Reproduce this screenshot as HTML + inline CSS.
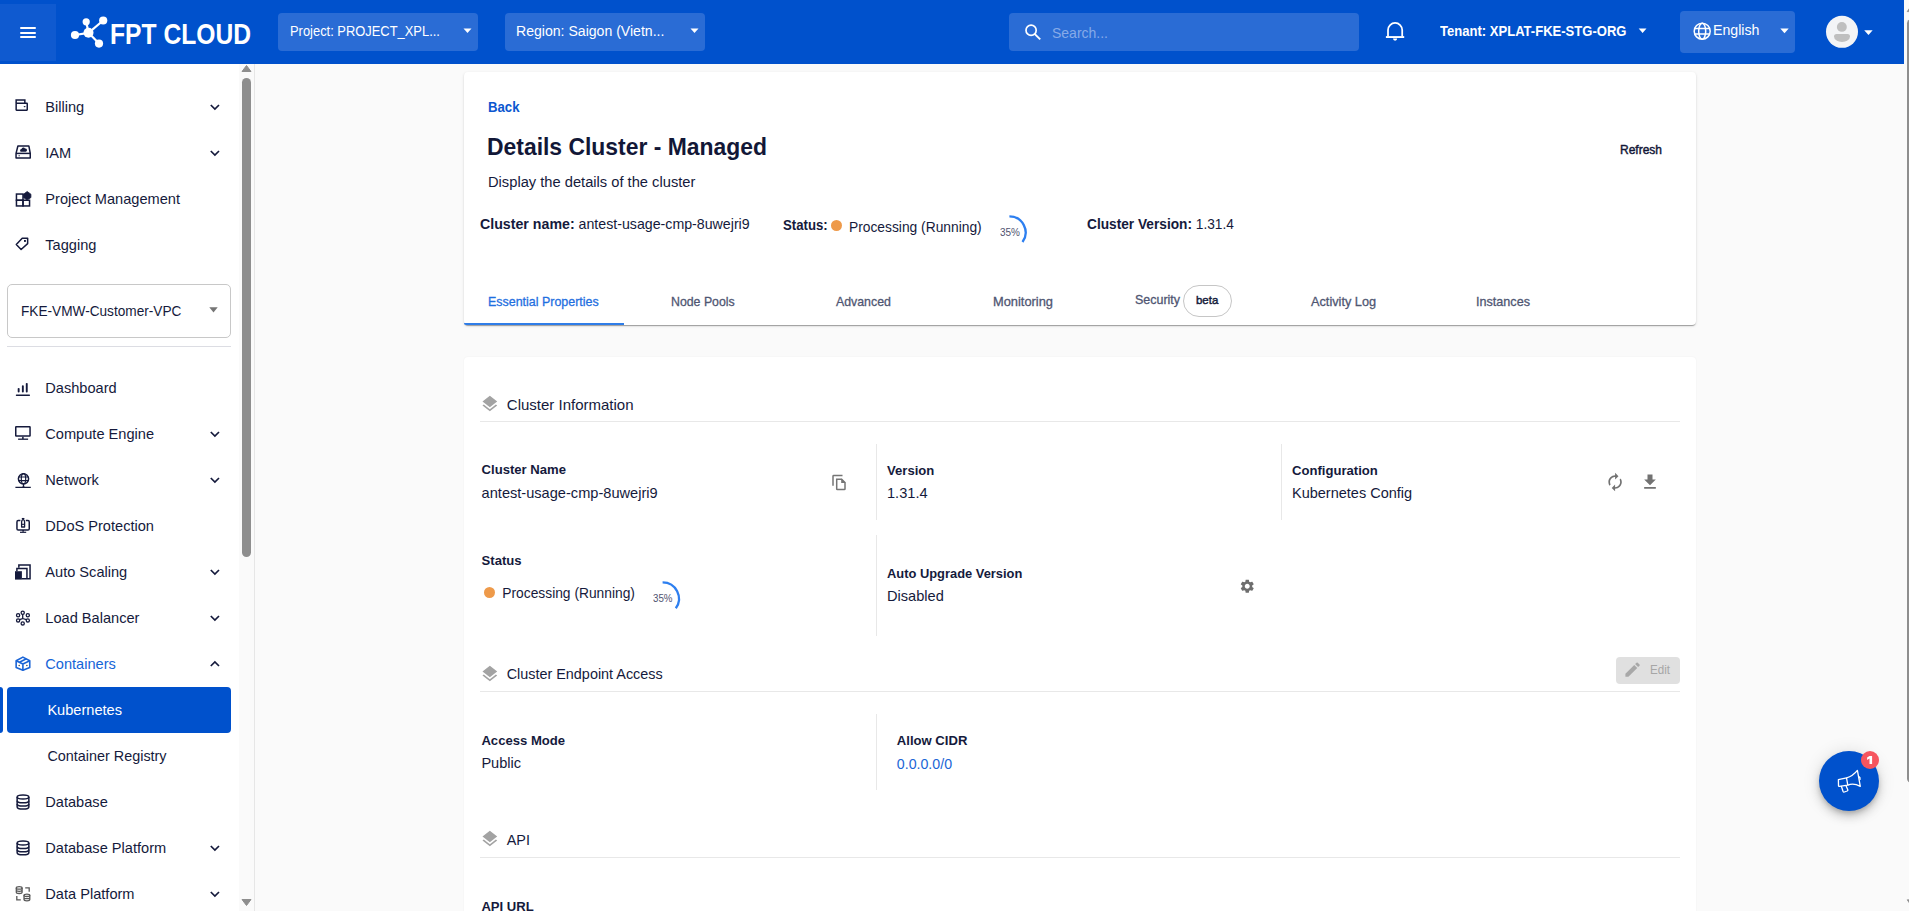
<!DOCTYPE html>
<html><head><meta charset="utf-8"><title>FPT Cloud - Details Cluster</title>
<style>
html,body{margin:0;padding:0;}
body{width:1909px;height:911px;overflow:hidden;position:relative;background:#fafafa;font-family:"Liberation Sans",sans-serif;}
.t{position:absolute;white-space:nowrap;line-height:20px;}
b{font-weight:700}
</style></head><body>
<div style="position:absolute;left:0px;top:0px;width:1904px;height:64px;background:#0051cc"></div>
<div style="position:absolute;left:0px;top:4px;width:56px;height:57px;background:#0f5ad0"></div>
<div style="position:absolute;left:19.5px;top:27px;width:16px;height:2px;background:#fff;border-radius:1px"></div>
<div style="position:absolute;left:19.5px;top:32px;width:16px;height:2px;background:#fff;border-radius:1px"></div>
<div style="position:absolute;left:19.5px;top:36px;width:16px;height:2px;background:#fff;border-radius:1px"></div>
<svg style="position:absolute;left:60px;top:5px;" width="60" height="50" viewBox="0 0 60 50"><g fill="#fff" stroke="#fff"><line x1="28.5" y1="27.8" x2="26.2" y2="16.8" stroke-width="2.2"/><line x1="28.5" y1="27.8" x2="43.2" y2="15.5" stroke-width="2.2"/><line x1="28.5" y1="27.8" x2="15" y2="30" stroke-width="2.2"/><line x1="28.5" y1="27.8" x2="39" y2="38.6" stroke-width="2.2"/><circle cx="26.2" cy="16.8" r="3.6" stroke="none"/><circle cx="43.2" cy="15.5" r="4.1" stroke="none"/><circle cx="28.5" cy="27.8" r="5" stroke="none"/><circle cx="15" cy="30" r="4.1" stroke="none"/><circle cx="39" cy="38.6" r="4.1" stroke="none"/></g></svg>
<div class="t" style="left:110.3px;top:23.80px;font-size:30px;font-weight:700;color:#fff;transform:scaleX(0.8214);transform-origin:0 0;">FPT CLOUD</div>
<div style="position:absolute;left:278px;top:13px;width:200px;height:38px;background:#2a6cd5;border-radius:4px"></div>
<div class="t" style="left:289.8px;top:20.79px;font-size:14.9px;font-weight:400;color:#fff;transform:scaleX(0.8667);transform-origin:0 0;">Project: PROJECT_XPL...</div>
<svg style="position:absolute;left:463px;top:28px;" width="10" height="6" viewBox="0 0 10 6"><path d="M0.5 0.5 L8.5 0.5 L4.5 5 Z" fill="#fff"/></svg>
<div style="position:absolute;left:505px;top:13px;width:200px;height:38px;background:#2a6cd5;border-radius:4px"></div>
<div class="t" style="left:516.3px;top:20.79px;font-size:14.9px;font-weight:400;color:#fff;transform:scaleX(0.9452);transform-origin:0 0;">Region: Saigon (Vietn...</div>
<svg style="position:absolute;left:690px;top:28px;" width="10" height="6" viewBox="0 0 10 6"><path d="M0.5 0.5 L8.5 0.5 L4.5 5 Z" fill="#fff"/></svg>
<div style="position:absolute;left:1009px;top:13px;width:350px;height:38px;background:#2a6cd5;border-radius:4px"></div>
<svg style="position:absolute;left:1022px;top:21px;" width="22" height="22" viewBox="0 0 22 22"><circle cx="9.1" cy="9.3" r="5.1" fill="none" stroke="#fff" stroke-width="1.7"/><path d="M12.6 12.8 L18.2 18.4" stroke="#fff" stroke-width="1.9"/></svg>
<div class="t" style="left:1051.6px;top:22.82px;font-size:14.5px;font-weight:400;color:#86aae8;transform:scaleX(0.9650);transform-origin:0 0;">Search...</div>
<svg style="position:absolute;left:1380px;top:15px" width="30" height="30" viewBox="1380 15 30 30"><path d="M1388 36.6 V30.05 A7.1 7.1 0 0 1 1402.2 30.05 V36.6" fill="none" stroke="#fff" stroke-width="1.75"/><rect x="1385.9" y="36.1" width="18.3" height="1.9" fill="#fff"/><path d="M1393 38.6 H1397.2 A2.1 2.1 0 0 1 1393 38.6 Z" fill="#fff"/></svg>
<div class="t" style="left:1440.2px;top:20.87px;font-size:15.5px;font-weight:700;color:#fff;transform:scaleX(0.8417);transform-origin:0 0;">Tenant: XPLAT-FKE-STG-ORG</div>
<svg style="position:absolute;left:1634px;top:24px" width="16" height="12" viewBox="1634 24 16 12"><path d="M1638.7 28.6 L1646.5 28.6 L1642.6 33.1 Z" fill="#fff"/></svg>
<div style="position:absolute;left:1680px;top:11px;width:115px;height:42px;background:#2a6cd5;border-radius:4px"></div>
<svg style="position:absolute;left:1693px;top:22px;" width="19" height="19" viewBox="0 0 19 19"><g fill="none" stroke="#fff" stroke-width="1.5"><circle cx="9.2" cy="9.2" r="8"/><ellipse cx="9.2" cy="9.2" rx="3.5" ry="8"/><path d="M1.5 6.5h15.4M1.5 12h15.4"/></g></svg>
<div class="t" style="left:1713px;top:19.79px;font-size:14.3px;font-weight:400;color:#fff;transform:scaleX(0.9914);transform-origin:0 0;">English</div>
<svg style="position:absolute;left:1776px;top:24px" width="16" height="12" viewBox="1776 24 16 12"><path d="M1780.3 28.5 L1788.7 28.5 L1784.5 33.3 Z" fill="#fff"/></svg>
<svg style="position:absolute;left:1824px;top:14px" width="36" height="36" viewBox="1824 14 36 36"><circle cx="1842" cy="31.85" r="16" fill="#f3f4f6"/><circle cx="1841.85" cy="26.9" r="4.95" fill="#bfbfbf"/><path d="M1836.5 33.9 H1847.5 Q1850 33.9 1850 36.6 A8 5.3 0 0 1 1834 36.6 Q1834 33.9 1836.5 33.9 Z" fill="#bfbfbf"/></svg>
<svg style="position:absolute;left:1860px;top:26px" width="16" height="12" viewBox="1860 26 16 12"><path d="M1864.2 30.3 L1872.7 30.3 L1868.45 35.1 Z" fill="#fff"/></svg>
<div style="position:absolute;left:1904px;top:0px;width:15px;height:911px;background:#fafafa"></div>
<div style="position:absolute;left:1907px;top:19px;width:9px;height:764px;background:#8e8e8e;border-radius:5px"></div>
<svg style="position:absolute;left:1904px;top:0px" width="15" height="16" viewBox="1904 0 15 16"><path d="M1911.5 5.4 L1915.8 11.6 L1907.2 11.6Z" fill="#8e8e8e" stroke="#8e8e8e" stroke-width="0.8" stroke-linejoin="round"/></svg>
<svg style="position:absolute;left:1904px;top:895px" width="15" height="16" viewBox="1904 895 15 16"><path d="M1907.2 899.8 L1915.8 899.8 L1911.5 906Z" fill="#8e8e8e" stroke="#8e8e8e" stroke-width="0.8" stroke-linejoin="round"/></svg>
<div style="position:absolute;left:0px;top:64px;width:254px;height:847px;background:#fff"></div>
<div style="position:absolute;left:254px;top:64px;width:1px;height:847px;background:#e6e6e6"></div>
<div style="position:absolute;left:239px;top:64px;width:15px;height:847px;background:#fafafa"></div>
<div style="position:absolute;left:242px;top:78px;width:9px;height:479px;background:#8e8e8e;border-radius:5px"></div>
<svg style="position:absolute;left:241px;top:64px;" width="11" height="9" viewBox="0 0 11 9"><path d="M5.5 1.5 L10 7.5 L1 7.5Z" fill="#8e8e8e" stroke="#8e8e8e" stroke-linejoin="round"/></svg>
<svg style="position:absolute;left:241px;top:898px;" width="11" height="9" viewBox="0 0 11 9"><path d="M1 1.5 L10 1.5 L5.5 7.5Z" fill="#8e8e8e" stroke="#8e8e8e" stroke-linejoin="round"/></svg>
<div class="t" style="left:45.3px;top:96.89px;font-size:14.6px;font-weight:400;color:#151a3c;">Billing</div>
<svg style="position:absolute;left:209px;top:102.5px;" width="12" height="8" viewBox="0 0 12 8"><path d="M1.8 2 L5.9 6 L10 2" fill="none" stroke="#151a3c" stroke-width="1.7"/></svg>
<div class="t" style="left:45.3px;top:142.89px;font-size:14.6px;font-weight:400;color:#151a3c;">IAM</div>
<svg style="position:absolute;left:209px;top:148.5px;" width="12" height="8" viewBox="0 0 12 8"><path d="M1.8 2 L5.9 6 L10 2" fill="none" stroke="#151a3c" stroke-width="1.7"/></svg>
<div class="t" style="left:45.3px;top:188.89px;font-size:14.6px;font-weight:400;color:#151a3c;">Project Management</div>
<div class="t" style="left:45.3px;top:235.39px;font-size:14.6px;font-weight:400;color:#151a3c;">Tagging</div>
<div style="position:absolute;left:7px;top:284px;width:224px;height:54px;box-sizing:border-box;border:1px solid #c8c8c8;border-radius:5px;background:#fff"></div>
<div class="t" style="left:21.2px;top:300.83px;font-size:14.2px;font-weight:400;color:#151a3c;transform:scaleX(0.9611);transform-origin:0 0;">FKE-VMW-Customer-VPC</div>
<svg style="position:absolute;left:205px;top:302px" width="16" height="14" viewBox="205 302 16 14"><path d="M209.3 307.3 L217.7 307.3 L213.5 312.4 Z" fill="#757575"/></svg>
<div style="position:absolute;left:7px;top:346px;width:224px;height:1px;background:#dcdde3"></div>
<div class="t" style="left:45.3px;top:378.19px;font-size:14.6px;font-weight:400;color:#151a3c;">Dashboard</div>
<div class="t" style="left:45.3px;top:424.29px;font-size:14.6px;font-weight:400;color:#151a3c;">Compute Engine</div>
<svg style="position:absolute;left:209px;top:429.9px;" width="12" height="8" viewBox="0 0 12 8"><path d="M1.8 2 L5.9 6 L10 2" fill="none" stroke="#151a3c" stroke-width="1.7"/></svg>
<div class="t" style="left:45.3px;top:470.09px;font-size:14.6px;font-weight:400;color:#151a3c;">Network</div>
<svg style="position:absolute;left:209px;top:475.7px;" width="12" height="8" viewBox="0 0 12 8"><path d="M1.8 2 L5.9 6 L10 2" fill="none" stroke="#151a3c" stroke-width="1.7"/></svg>
<div class="t" style="left:45.3px;top:515.99px;font-size:14.6px;font-weight:400;color:#151a3c;">DDoS Protection</div>
<div class="t" style="left:45.3px;top:562.09px;font-size:14.6px;font-weight:400;color:#151a3c;">Auto Scaling</div>
<svg style="position:absolute;left:209px;top:567.7px;" width="12" height="8" viewBox="0 0 12 8"><path d="M1.8 2 L5.9 6 L10 2" fill="none" stroke="#151a3c" stroke-width="1.7"/></svg>
<div class="t" style="left:45.3px;top:608.19px;font-size:14.6px;font-weight:400;color:#151a3c;">Load Balancer</div>
<svg style="position:absolute;left:209px;top:613.8px;" width="12" height="8" viewBox="0 0 12 8"><path d="M1.8 2 L5.9 6 L10 2" fill="none" stroke="#151a3c" stroke-width="1.7"/></svg>
<div class="t" style="left:45.3px;top:654.29px;font-size:14.6px;font-weight:400;color:#1565d8;">Containers</div>
<svg style="position:absolute;left:209px;top:659.9px;" width="12" height="8" viewBox="0 0 12 8"><path d="M1.8 6 L5.9 2 L10 6" fill="none" stroke="#151a3c" stroke-width="1.7"/></svg>
<svg style="position:absolute;left:10px;top:94px" width="24" height="20" viewBox="10 94 24 20"><g fill="none" stroke="#151a3c" stroke-width="1.5"><rect x="16.15" y="103.35" width="11.1" height="6.8" rx="0.4"/><path d="M16.15 103.35 V100.05 H24.85 V103.35"/></g><ellipse cx="24.6" cy="106.6" rx="1" ry="0.65" fill="#151a3c"/></svg>
<svg style="position:absolute;left:10px;top:140px" width="24" height="22" viewBox="10 140 24 22"><g fill="none" stroke="#151a3c" stroke-width="1.5" stroke-linejoin="round"><path d="M17.9 146.05 H28.9 L30.25 153.4 V157.95 H16.05 V153.4 Z"/><path d="M16.05 153.4 H30.25"/></g><path d="M20.7 151.7 a1.5 1.5 0 0 1 0.8-2.7 a1.9 1.9 0 0 1 3.5-0.4 a1.5 1.5 0 0 1 0.8 3.1 Z" fill="#151a3c"/><rect x="18.6" y="155.2" width="1.1" height="1.1" fill="#151a3c"/></svg>
<svg style="position:absolute;left:10px;top:188px" width="24" height="22" viewBox="10 188 24 22"><g fill="none" stroke="#151a3c" stroke-width="1.5"><rect x="16.45" y="194.05" width="6.55" height="6.2"/><rect x="16.45" y="200.25" width="6.55" height="5.7"/><rect x="23" y="200.25" width="6.55" height="5.7"/></g><path d="M27.2 191.5 L30.9 194.2 V197.6 L27.2 200 L23.5 197.6 V194.2 Z" fill="#151a3c" stroke="#151a3c" stroke-width="0.8" stroke-linejoin="round"/></svg>
<svg style="position:absolute;left:10px;top:233px" width="24" height="22" viewBox="10 233 24 22"><path d="M16.3 244.6 L22.2 238.15 H27.65 V243.6 L21.1 249.5 Z" fill="none" stroke="#151a3c" stroke-width="1.5" stroke-linejoin="round"/><rect x="24" y="240" width="1.9" height="1.9" fill="#151a3c"/></svg>
<svg style="position:absolute;left:10px;top:378px" width="24" height="22" viewBox="10 378 24 22"><g fill="#151a3c"><rect x="17.7" y="387.9" width="1.9" height="4.6" rx="0.9"/><rect x="21.9" y="385.2" width="1.9" height="7.3" rx="0.9"/><rect x="25.8" y="382.9" width="1.9" height="9.6" rx="0.9"/><rect x="15.8" y="394.6" width="14.2" height="1.3" rx="0.6"/></g></svg>
<svg style="position:absolute;left:10px;top:422px" width="24" height="22" viewBox="10 422 24 22"><g fill="none" stroke="#151a3c" stroke-width="1.5"><rect x="15.75" y="426.75" width="14.3" height="9.3" rx="0.4"/><path d="M22.9 436.8 V439"/><path d="M18.1 439.2 H28.1" stroke-width="1.3"/></g></svg>
<svg style="position:absolute;left:10px;top:470px" width="24" height="22" viewBox="10 470 24 22"><g fill="none" stroke="#151a3c" stroke-width="1.5"><circle cx="23.5" cy="478.8" r="5.1"/><ellipse cx="23.5" cy="478.8" rx="2.2" ry="5.1" stroke-width="1.2"/><path d="M18.6 477 H28.4 M18.6 480.6 H28.4" stroke-width="1.1"/><path d="M23.5 484 V486 Q23.5 487.4 22 487.4 H15.4 M23.5 486 Q23.5 487.4 25 487.4 H30.8" stroke-width="1.3"/></g></svg>
<svg style="position:absolute;left:10px;top:515px" width="24" height="22" viewBox="10 515 24 22"><g fill="none" stroke="#151a3c" stroke-width="1.5" stroke-linejoin="round"><path d="M20.4 520.6 H18.2 Q16.95 520.6 16.95 521.9 V528.7 Q16.95 530 18.2 530 H28 Q29.25 530 29.25 528.7 V521.9 Q29.25 520.6 28 520.6 H25.8"/><path d="M23.1 530 V531.8"/><path d="M20 532.3 H26.2" stroke-width="1.2"/><path d="M23.1 519.3 Q24.6 519.9 24.6 522 V527 H21.6 V522 Q21.6 519.9 23.1 519.3 Z" stroke-width="1.3"/><path d="M21.6 524.3 H24.6" stroke-width="1.1"/></g><path d="M21.8 518.5 H24.4" stroke="#151a3c" stroke-width="1.1"/></svg>
<svg style="position:absolute;left:10px;top:560px" width="24" height="22" viewBox="10 560 24 22"><g fill="none" stroke="#151a3c" stroke-width="1.5"><path d="M18.85 567.7 V564.95 H30.05 V578.85 H21.9"/><path d="M16.9 571.2 V568.45 H26.95 V578.85"/></g><rect x="15" y="571.2" width="6.9" height="8.4" fill="#151a3c"/></svg>
<svg style="position:absolute;left:10px;top:608px" width="24" height="20" viewBox="10 608 24 20"><g fill="none" stroke="#151a3c" stroke-width="1.3"><circle cx="22.7" cy="612.7" r="1.6"/><circle cx="18.1" cy="615.2" r="1.6"/><circle cx="27.8" cy="615.2" r="1.6"/><circle cx="18.1" cy="620.4" r="1.6"/><circle cx="27.8" cy="620.4" r="1.6"/><circle cx="22.7" cy="623.4" r="1.6"/><path d="M22.7 614.3 V618.5 L19.6 619.7 M22.7 618.5 L26.3 619.7"/></g></svg>
<svg style="position:absolute;left:10px;top:652px" width="24" height="22" viewBox="10 652 24 22"><g fill="none" stroke="#1a64d6" stroke-width="1.6" stroke-linejoin="round"><path d="M22.9 657.1 L29.75 660.8 V667.4 L22.9 670.3 L16.15 667.4 V660.8 Z"/><path d="M16.15 660.8 L22.9 664 L29.75 660.8 M22.9 664 V670.3"/><path d="M19.4 662.3 L26.4 658.7"/></g><circle cx="19.2" cy="665.6" r="0.75" fill="#444"/><circle cx="26.9" cy="665.6" r="0.75" fill="#444"/></svg>
<svg style="position:absolute;left:10px;top:790px" width="24" height="22" viewBox="10 790 24 22"><g fill="none" stroke="#151a3c" stroke-width="1.5"><ellipse cx="23" cy="797.1" rx="5.85" ry="2.0"/><path d="M17.15 797.1 V806.9 C17.15 808.4 19.8 809.0 23 809.0 S28.85 808.4 28.85 806.9 V797.1"/><path d="M17.15 800.7 C17.15 802.2 19.8 802.8 23 802.8 S28.85 802.2 28.85 800.7 M17.15 803.9 C17.15 805.4 19.8 806.0 23 806.0 S28.85 805.4 28.85 803.9"/></g></svg>
<svg style="position:absolute;left:10px;top:836px" width="24" height="22" viewBox="10 836 24 22"><g fill="none" stroke="#151a3c" stroke-width="1.5"><ellipse cx="23" cy="842.9" rx="5.85" ry="2.0"/><path d="M17.15 842.9 V852.6999999999999 C17.15 854.1999999999999 19.8 854.8 23 854.8 S28.85 854.1999999999999 28.85 852.6999999999999 V842.9"/><path d="M17.15 846.5 C17.15 848.0 19.8 848.5999999999999 23 848.5999999999999 S28.85 848.0 28.85 846.5 M17.15 849.6999999999999 C17.15 851.1999999999999 19.8 851.8 23 851.8 S28.85 851.1999999999999 28.85 849.6999999999999"/></g></svg>
<svg style="position:absolute;left:10px;top:882px" width="24" height="22" viewBox="10 882 24 22"><g fill="none" stroke="#5a5a5a" stroke-width="1.3"><ellipse cx="19.2" cy="887.9" rx="2.9" ry="1.2"/><path d="M16.3 887.9 V892.3 C16.3 893.1 17.6 893.5 19.2 893.5 S22.1 893.1 22.1 892.3 V887.9 M16.3 890.1 C16.3 890.9 17.6 891.3 19.2 891.3 S22.1 890.9 22.1 890.1"/><ellipse cx="26.9" cy="895.3" rx="2.9" ry="1.2"/><path d="M24 895.3 V899.6 C24 900.4 25.3 900.8 26.9 900.8 S29.8 900.4 29.8 899.6 V895.3 M24 897.5 C24 898.3 25.3 898.7 26.9 898.7 S29.8 898.3 29.8 897.5"/><path d="M25.2 887.9 H29.2 V891.8 M16.8 895.9 V899.9 H20.8"/></g></svg>
<div style="position:absolute;left:0px;top:687px;width:3px;height:46px;background:#0051cc;border-radius:0 3px 3px 0"></div>
<div style="position:absolute;left:7px;top:687px;width:224px;height:46px;background:#0051cc;border-radius:4px"></div>
<div class="t" style="left:47.4px;top:699.89px;font-size:14.6px;font-weight:400;color:#fff;">Kubernetes</div>
<div class="t" style="left:47.4px;top:746.06px;font-size:14.4px;font-weight:400;color:#151a3c;">Container Registry</div>
<div class="t" style="left:45.3px;top:791.69px;font-size:14.6px;font-weight:400;color:#151a3c;">Database</div>
<div class="t" style="left:45.3px;top:838.09px;font-size:14.6px;font-weight:400;color:#151a3c;">Database Platform</div>
<svg style="position:absolute;left:209px;top:843.7px;" width="12" height="8" viewBox="0 0 12 8"><path d="M1.8 2 L5.9 6 L10 2" fill="none" stroke="#151a3c" stroke-width="1.7"/></svg>
<div class="t" style="left:45.3px;top:884.19px;font-size:14.6px;font-weight:400;color:#151a3c;">Data Platform</div>
<svg style="position:absolute;left:209px;top:889.8px;" width="12" height="8" viewBox="0 0 12 8"><path d="M1.8 2 L5.9 6 L10 2" fill="none" stroke="#151a3c" stroke-width="1.7"/></svg>
<div style="position:absolute;left:464px;top:72px;width:1232px;height:253px;background:#fff;border-radius:4px;box-shadow:0 2px 1px -1px rgba(0,0,0,.2),0 1px 1px 0 rgba(0,0,0,.14),0 1px 3px 0 rgba(0,0,0,.12)"></div>
<div class="t" style="left:487.5px;top:97.00px;font-size:14.3px;font-weight:700;color:#0b57d0;transform:scaleX(0.9214);transform-origin:0 0;">Back</div>
<div class="t" style="left:487.2px;top:137.43px;font-size:24.5px;font-weight:700;color:#121737;transform:scaleX(0.9348);transform-origin:0 0;">Details Cluster - Managed</div>
<div class="t" style="left:488px;top:171.85px;font-size:14.7px;font-weight:400;color:#151a3c;">Display the details of the cluster</div>
<div class="t" style="left:1620px;top:140.39px;font-size:12.9px;font-weight:400;color:#121737;-webkit-text-stroke:0.45px #121737;transform:scaleX(0.9298);transform-origin:0 0;">Refresh</div>
<div class="t" style="left:480px;top:213.63px;font-size:14.2px;font-weight:400;color:#151a3c;"><b>Cluster name:</b> antest-usage-cmp-8uwejri9</div>
<div class="t" style="left:783.2px;top:214.63px;font-size:14.2px;font-weight:400;color:#151a3c;transform:scaleX(0.9309);transform-origin:0 0;"><b>Status:</b></div>
<div style="position:absolute;left:831.3px;top:220px;width:11px;height:11px;background:#ee9a4a;border-radius:50%"></div>
<div class="t" style="left:849px;top:218.17px;font-size:13.8px;font-weight:400;color:#151a3c;">Processing (Running)</div>
<div class="t" style="left:999.6px;top:221.92px;font-size:10.8px;font-weight:400;color:#4f5370;transform:scaleX(0.9252);transform-origin:0 0;">35%</div>
<svg style="position:absolute;left:990px;top:210px" width="40" height="40" viewBox="990 210 40 40"><path d="M1009.4 216.3 A16.2 16.2 0 0 1 1022.5 242.0" fill="none" stroke="#2d7ff0" stroke-width="2.3"/></svg>
<div class="t" style="left:1086.8px;top:214.13px;font-size:14.2px;font-weight:400;color:#151a3c;transform:scaleX(0.9650);transform-origin:0 0;"><b>Cluster Version:</b> 1.31.4</div>
<div class="t" style="left:488.0px;top:292.38px;font-size:13.2px;font-weight:400;color:#1f6fdf;-webkit-text-stroke:0.3px #1f6fdf;transform:scaleX(0.9439);transform-origin:0 0;">Essential Properties</div>
<div class="t" style="left:671.2px;top:292.38px;font-size:13.2px;font-weight:400;color:#4f5672;-webkit-text-stroke:0.3px #4f5672;transform:scaleX(0.9349);transform-origin:0 0;">Node Pools</div>
<div class="t" style="left:835.7px;top:292.38px;font-size:13.2px;font-weight:400;color:#4f5672;-webkit-text-stroke:0.3px #4f5672;transform:scaleX(0.9351);transform-origin:0 0;">Advanced</div>
<div class="t" style="left:993.3000000000001px;top:292.38px;font-size:13.2px;font-weight:400;color:#4f5672;-webkit-text-stroke:0.3px #4f5672;transform:scaleX(0.9735);transform-origin:0 0;">Monitoring</div>
<div class="t" style="left:1310.5px;top:292.38px;font-size:13.2px;font-weight:400;color:#4f5672;-webkit-text-stroke:0.3px #4f5672;transform:scaleX(0.9645);transform-origin:0 0;">Activity Log</div>
<div class="t" style="left:1476.2px;top:292.38px;font-size:13.2px;font-weight:400;color:#4f5672;-webkit-text-stroke:0.3px #4f5672;transform:scaleX(0.9558);transform-origin:0 0;">Instances</div>
<div class="t" style="left:1135px;top:290.02px;font-size:12.8px;font-weight:400;color:#4f5672;-webkit-text-stroke:0.3px #4f5672;transform:scaleX(0.9732);transform-origin:0 0;">Security</div>
<div style="position:absolute;left:1183px;top:285px;width:49px;height:32px;box-sizing:border-box;border:1px solid #c6c6c6;border-radius:16px;background:#fff"></div>
<div class="t" style="left:1196.3px;top:289.57px;font-size:11.8px;font-weight:400;color:#141a3b;-webkit-text-stroke:0.45px #141a3b;transform:scaleX(0.9710);transform-origin:0 0;">beta</div>
<div style="position:absolute;left:464px;top:323px;width:160px;height:2px;background:#2f7de8;border-radius:0 0 0 3px"></div>
<div style="position:absolute;left:464px;top:357px;width:1232px;height:600px;background:#fff;border-radius:4px;box-shadow:0 0 2px rgba(0,0,0,.06)"></div>
<div class="t" style="left:506.8px;top:394.55px;font-size:15.0px;font-weight:400;color:#151a3c;">Cluster Information</div>
<svg style="position:absolute;left:480.4px;top:394.4px" width="19.7" height="19.7" viewBox="0 0 24 24"><path fill="#a3a3a3" d="M11.99 18.54l-7.37-5.73L3 14.07l9 7 9-7-1.63-1.27-7.38 5.74zM12 16l7.36-5.73L21 9l-9-7-9 7 1.63 1.27L12 16z"/></svg>
<div style="position:absolute;left:480px;top:421px;width:1200px;height:1px;background:#e8e8e8"></div>
<div class="t" style="left:481.6px;top:460.22px;font-size:13.1px;font-weight:700;color:#151a3c;">Cluster Name</div>
<div class="t" style="left:481.6px;top:482.99px;font-size:14.6px;font-weight:400;color:#151a3c;">antest-usage-cmp-8uwejri9</div>
<svg style="position:absolute;left:828px;top:470px" width="22" height="24" viewBox="828 470 22 24"><g fill="none" stroke="#757575" stroke-width="1.5"><path d="M833 485.8 V476.3 Q833 475.6 833.7 475.6 H842.5"/><path d="M836.7 479.2 H841.6 L845 482.6 V488.9 Q845 489.6 844.3 489.6 H837.4 Q836.7 489.6 836.7 488.9 Z"/></g><path d="M841.2 478.6 L845.6 483 H841.2 Z" fill="#757575"/></svg>
<div style="position:absolute;left:876px;top:444px;width:1px;height:76px;background:#e8e8e8"></div>
<div class="t" style="left:887px;top:460.72px;font-size:13.1px;font-weight:700;color:#151a3c;">Version</div>
<div class="t" style="left:887px;top:482.89px;font-size:14.6px;font-weight:400;color:#151a3c;">1.31.4</div>
<div style="position:absolute;left:1281px;top:444px;width:1px;height:76px;background:#e8e8e8"></div>
<div class="t" style="left:1292px;top:460.72px;font-size:13.1px;font-weight:700;color:#151a3c;">Configuration</div>
<div class="t" style="left:1292px;top:482.93px;font-size:14.5px;font-weight:400;color:#151a3c;">Kubernetes Config</div>
<svg style="position:absolute;left:1605.2px;top:472.4px" width="20.2" height="20.2" viewBox="0 0 24 24"><path fill="#727272" d="M12 6v3l4-4-4-4v3c-4.42 0-8 3.58-8 8 0 1.57.46 3.03 1.24 4.26L6.7 14.8c-.45-.83-.7-1.79-.7-2.8 0-3.31 2.69-6 6-6zm6.76 1.74L17.3 9.2c.44.84.7 1.79.7 2.8 0 3.31-2.69 6-6 6v-3l-4 4 4 4v-3c4.42 0 8-3.58 8-8 0-1.57-.46-3.03-1.24-4.26z"/></svg>
<svg style="position:absolute;left:1639.5px;top:472.3px" width="20" height="20" viewBox="0 0 24 24"><path fill="#727272" d="M19 9h-4V3H9v6H5l7 7 7-7zM5 18v2h14v-2H5z"/></svg>
<div class="t" style="left:481.6px;top:551.01px;font-size:13.1px;font-weight:700;color:#151a3c;">Status</div>
<div style="position:absolute;left:484px;top:587px;width:11px;height:11px;background:#ee9a4a;border-radius:50%"></div>
<div class="t" style="left:502.3px;top:584.37px;font-size:13.8px;font-weight:400;color:#151a3c;">Processing (Running)</div>
<div class="t" style="left:653.4px;top:587.92px;font-size:10.8px;font-weight:400;color:#4f5370;transform:scaleX(0.9021);transform-origin:0 0;">35%</div>
<svg style="position:absolute;left:640px;top:575px" width="45" height="45" viewBox="640 575 45 45"><path d="M662.6 582.4 A16.3 16.3 0 0 1 675.8 608.3" fill="none" stroke="#2d7ff0" stroke-width="2.3"/></svg>
<div style="position:absolute;left:876px;top:535px;width:1px;height:101px;background:#e8e8e8"></div>
<div class="t" style="left:887px;top:563.78px;font-size:12.9px;font-weight:700;color:#151a3c;">Auto Upgrade Version</div>
<div class="t" style="left:887px;top:585.79px;font-size:14.6px;font-weight:400;color:#151a3c;">Disabled</div>
<svg style="position:absolute;left:1238.5px;top:577.5px" width="16.5" height="16.5" viewBox="0 0 24 24"><path fill="#6e6e6e" d="M19.14 12.94c.04-.3.06-.61.06-.94 0-.32-.02-.64-.07-.94l2.03-1.58c.18-.14.23-.41.12-.61l-1.92-3.32c-.12-.22-.37-.29-.59-.22l-2.39.96c-.5-.38-1.03-.7-1.62-.94l-.36-2.54c-.04-.24-.24-.41-.48-.41h-3.84c-.24 0-.43.17-.47.41l-.36 2.54c-.59.24-1.13.57-1.62.94l-2.39-.96c-.22-.08-.47 0-.59.22L2.74 8.87c-.12.21-.08.47.12.61l2.03 1.58c-.05.3-.09.63-.09.94s.02.64.07.94l-2.03 1.58c-.18.14-.23.41-.12.61l1.92 3.32c.12.22.37.29.59.22l2.39-.96c.5.38 1.03.7 1.62.94l.36 2.54c.05.24.24.41.48.41h3.84c.24 0 .44-.17.47-.41l.36-2.54c.59-.24 1.13-.56 1.62-.94l2.39.96c.22.08.47 0 .59-.22l1.92-3.32c.12-.22.07-.47-.12-.61l-2.01-1.58zM12 15.6c-1.98 0-3.6-1.62-3.6-3.6s1.62-3.6 3.6-3.6 3.6 1.62 3.6 3.6-1.62 3.6-3.6 3.6z"/></svg>
<svg style="position:absolute;left:480.4px;top:663.7px" width="19.7" height="19.7" viewBox="0 0 24 24"><path fill="#a3a3a3" d="M11.99 18.54l-7.37-5.73L3 14.07l9 7 9-7-1.63-1.27-7.38 5.74zM12 16l7.36-5.73L21 9l-9-7-9 7 1.63 1.27L12 16z"/></svg>
<div class="t" style="left:506.7px;top:664.26px;font-size:14.4px;font-weight:400;color:#151a3c;">Cluster Endpoint Access</div>
<div style="position:absolute;left:1616px;top:657px;width:64px;height:27px;background:#e0e0e0;border-radius:4px"></div>
<svg style="position:absolute;left:1622.8px;top:660.3px" width="19.2" height="19.2" viewBox="0 0 24 24"><path fill="#a8a8a8" d="M3 17.25V21h3.75L17.81 9.94l-3.75-3.75L3 17.25zM20.71 7.04c.39-.39.39-1.02 0-1.41l-2.34-2.34c-.39-.39-1.02-.39-1.41 0l-1.83 1.83 3.75 3.75 1.83-1.83z"/></svg>
<div class="t" style="left:1649.6px;top:659.93px;font-size:12.2px;font-weight:400;color:#a6a6a6;transform:scaleX(0.9514);transform-origin:0 0;">Edit</div>
<div style="position:absolute;left:480px;top:691px;width:1200px;height:1px;background:#e8e8e8"></div>
<div class="t" style="left:481.4px;top:731.01px;font-size:13.1px;font-weight:700;color:#151a3c;">Access Mode</div>
<div class="t" style="left:481.4px;top:753.39px;font-size:14.6px;font-weight:400;color:#151a3c;">Public</div>
<div style="position:absolute;left:876px;top:714px;width:1px;height:76px;background:#e8e8e8"></div>
<div class="t" style="left:896.8px;top:731.01px;font-size:13.1px;font-weight:700;color:#151a3c;">Allow CIDR</div>
<div class="t" style="left:896.8px;top:753.53px;font-size:14.2px;font-weight:400;color:#1b66d6;">0.0.0.0/0</div>
<svg style="position:absolute;left:480.4px;top:829.4px" width="19.7" height="19.7" viewBox="0 0 24 24"><path fill="#a3a3a3" d="M11.99 18.54l-7.37-5.73L3 14.07l9 7 9-7-1.63-1.27-7.38 5.74zM12 16l7.36-5.73L21 9l-9-7-9 7 1.63 1.27L12 16z"/></svg>
<div class="t" style="left:506.7px;top:830.26px;font-size:14.4px;font-weight:400;color:#151a3c;">API</div>
<div style="position:absolute;left:480px;top:857px;width:1200px;height:1px;background:#e8e8e8"></div>
<div class="t" style="left:481.4px;top:897.41px;font-size:13.1px;font-weight:700;color:#151a3c;">API URL</div>
<div style="position:absolute;left:1819px;top:751px;width:60px;height:60px;background:#0051cc;border-radius:50%;box-shadow:0 3px 5px -1px rgba(0,0,0,.2),0 6px 10px 0 rgba(0,0,0,.14),0 1px 18px 0 rgba(0,0,0,.12)"></div>
<svg style="position:absolute;left:1830px;top:762px" width="40" height="40" viewBox="1830 762 40 40"><g fill="none" stroke="#fff" stroke-width="1.3" stroke-linejoin="round"><path d="M1838.4 779.6 L1846.5 777.9 L1847.8 785.1 L1839.4 786.3 Q1838.6 786.4 1838.5 785.6 Z"/><path d="M1846.5 777.9 Q1853 776 1857.4 770.4 L1860.3 786.4 Q1853.5 782.6 1847.8 785.1"/><path d="M1858.9 776.6 Q1860.6 777.6 1860 779.8"/><path d="M1841.3 786 L1843 791.3 Q1843.4 792.3 1844.4 792 L1847.2 791 Q1848.1 790.6 1847.8 789.7 L1845.9 785.4"/></g></svg>
<div style="position:absolute;left:1861px;top:751px;width:18px;height:18px;background:#f6555e;border-radius:50%"></div>
<svg style="position:absolute;left:1860px;top:750px" width="20" height="20" viewBox="1860 750 20 20"><path d="M1869.5 755.9 H1872.1 V764.1 H1869.5 V758.6 L1867.1 759.9 V757.6 Z" fill="#fff"/></svg>
</body></html>
